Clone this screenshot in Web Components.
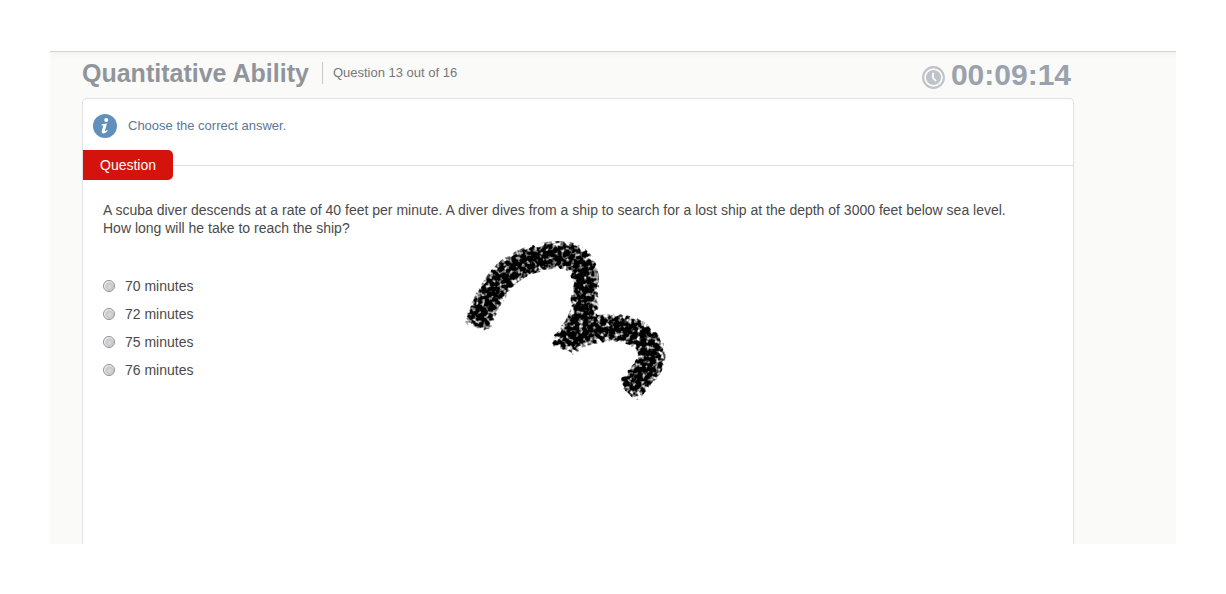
<!DOCTYPE html>
<html lang="en">
<head>
<meta charset="utf-8">
<title>Quantitative Ability</title>
<style>
body { margin: 0; background: #fff; font-family: "Liberation Sans", Arial, sans-serif; color: #4a4a4a; }
</style>
</head>
<body>
<quiz-page>
  <quiz-header slot="header">
    <span slot="title">Quantitative Ability</span>
    <span slot="progress">Question 13 out of 16</span>
    <quiz-timer slot="timer">00:09:14</quiz-timer>
  </quiz-header>
  <question-card>
    <info-note slot="note">Choose the correct answer.</info-note>
    <span slot="tag">Question</span>
    <span slot="text">A scuba diver descends at a rate of 40 feet per minute. A diver dives from a ship to search for a lost ship at the depth of 3000 feet below sea level. How long will he take to reach the ship?</span>
    <answer-list slot="answers" options="70 minutes|72 minutes|75 minutes|76 minutes"></answer-list>
    <brush-mark slot="mark"></brush-mark>
  </question-card>
</quiz-page>
<script>
const define = (name, html, setup) => customElements.define(name, class extends HTMLElement {
  constructor() {
    super();
    this.attachShadow({ mode: "open" }).innerHTML = html;
  }
  connectedCallback() { if (setup) setup(this, this.shadowRoot); }
});

define("quiz-page", `
<style>
  :host { display: flex; box-sizing: border-box; min-height: 100vh; padding: 51px 50px 50px; }
  main { flex: 1; display: flex; flex-direction: column; box-sizing: border-box;
    border-top: 1px solid #d3d5d0; padding: 0 102px 0 32px;
    background: linear-gradient(#f3f3f1, #fafaf8 6px); }
  ::slotted(question-card) { flex: 1; }
</style>
<main><slot name="header"></slot><slot></slot></main>`);

define("quiz-header", `
<style>
  :host { display: block; }
  header { display: flex; align-items: center; height: 46px; box-sizing: border-box; padding-bottom: 4px; }
  h1 { margin: 0; font-size: 25px; line-height: 30px; font-weight: bold; color: #90959b; white-space: nowrap; }
  p { margin: 0 0 0 13px; padding-left: 10px; border-left: 1px solid #c6c8ca;
    font-size: 13px; line-height: 22px; color: #75787b; white-space: nowrap; }
  .time { margin-left: auto; padding: 4px 3px 0 0; }
</style>
<header>
  <h1><slot name="title"></slot></h1>
  <p><slot name="progress"></slot></p>
  <div class="time"><slot name="timer"></slot></div>
</header>`);

define("quiz-timer", `
<style>
  :host { display: flex; align-items: center; gap: 6px; font-size: 30px; line-height: 34px; font-weight: bold; color: #99a2ad; }
  svg { display: block; margin-top: 4px; }
</style>
<svg width="23" height="23" viewBox="0 0 23 23" aria-hidden="true">
  <circle cx="11.5" cy="11.5" r="10.4" fill="#fafaf8" stroke="#bdc3c9" stroke-width="2.1"/>
  <circle cx="11.5" cy="11.5" r="7.6" fill="#bdc3c9"/>
  <path d="M11 6.8v5.2l3.2 3" fill="none" stroke="#fff" stroke-width="1.7"/>
</svg>
<time><slot></slot></time>`);

define("question-card", `
<style>
  :host { display: block; position: relative; box-sizing: border-box; background: #fff;
    border: 1px solid #dfe1e2; border-bottom: 0; border-radius: 5px 5px 0 0; }
  .note { padding: 15px 10px 12px; }
  .rule { display: flex; align-items: center; }
  .rule::after { content: ""; flex: 1; height: 1px; background: #dfe1e2; }
  h2 { margin: 0; padding: 0 17px; font-size: 14px; line-height: 30px; font-weight: normal;
    color: #fff; background: #d4130d; border-radius: 0 5px 5px 0; }
  .body { padding: 21px 40px 0 20px; font-size: 14px; line-height: 18px; }
  p { margin: 0 0 35px; }
  .mark { position: absolute; left: 367px; top: 131px; pointer-events: none; }
</style>
<div class="note"><slot name="note"></slot></div>
<div class="rule"><h2><slot name="tag"></slot></h2></div>
<div class="body">
  <p><slot name="text"></slot></p>
  <slot name="answers"></slot>
</div>
<div class="mark"><slot name="mark"></slot></div>`);

define("info-note", `
<style>
  :host { display: flex; align-items: center; gap: 11px; font-size: 13px; line-height: 24px; color: #5b7796; }
  svg { display: block; }
</style>
<svg width="24" height="24" viewBox="0 0 24 24" aria-hidden="true">
  <circle cx="12" cy="12" r="12" fill="#6290bd"/>
  <circle cx="13.2" cy="6" r="2" fill="#fff"/>
  <path d="M8.7 10.2 14 9.4l-2 7.2q-.2.9.5.6l1.5-1.2.8.8q-2.1 2.6-4.3 2.6-2.3 0-1.7-2.4l1.5-5.4-1.8-.2Z" fill="#fff"/>
</svg>
<span><slot></slot></span>`);

define("answer-list", `
<style>
  :host { display: block; font-size: 14px; line-height: 28px; }
  fieldset { margin: 0; padding: 0; border: 0; min-width: 0; display: grid; justify-items: start; }
  label { display: flex; align-items: center; gap: 10px; }
  input { appearance: none; width: 12px; height: 12px; margin: 0; border: 1px solid #8b8d90; border-radius: 50%;
    background: radial-gradient(circle at 55% 55%, #dcdde0 0, #c6c8cb 3px, #d0d1d4 4px, #f1f1f1 5px); }
  input:checked { background: radial-gradient(circle, #2d5a87 35%, #f1f1f1 45%); }
</style>
<fieldset aria-label="Answers"></fieldset>`, (host, root) => {
  const set = root.querySelector("fieldset");
  set.replaceChildren(...host.getAttribute("options").split("|").map((text, i) => {
    const label = document.createElement("label");
    const input = document.createElement("input");
    input.type = "radio";
    input.name = "answer";
    input.id = "answer-" + i;
    label.htmlFor = input.id;
    const span = document.createElement("span");
    span.textContent = text;
    label.append(input, span);
    return label;
  }));
});

define("brush-mark", `
<style>
  :host, svg { display: block; }
</style>
<svg width="230" height="180" viewBox="0 0 690 540" aria-hidden="true">
  <defs>
    <filter id="chalk" x="0" y="0" width="690" height="540" filterUnits="userSpaceOnUse" color-interpolation-filters="sRGB">
      <feGaussianBlur in="SourceAlpha" stdDeviation="11" result="soft"/>
      <feTurbulence type="fractalNoise" baseFrequency="0.075" numOctaves="2" seed="7" result="noise"/>
      <feComposite in="soft" in2="noise" operator="arithmetic" k1="0" k2="2.2" k3="3.2" k4="-2.7" result="grain"/>
      <feColorMatrix in="grain" type="matrix" values="0 0 0 0 0  0 0 0 0 0  0 0 0 0 0  0 0 0 1 0" result="ink"/>
      <feComposite in="ink" in2="SourceAlpha" operator="in" result="cut"/>
      <feGaussianBlur in="cut" stdDeviation="1.3"/>
    </filter>
  </defs>
  <g filter="url(#chalk)" fill="none" stroke="#000" stroke-width="84">
    <path d="M76 295C106 225 138 150 190 115C240 85 300 70 345 76C405 86 410 135 404 190C404 240 402 260 384 288C370 308 352 326 343 360"/>
    <path d="M340 345C380 306 430 294 495 293C560 294 606 338 605 378C600 420 566 446 529 486"/>
  </g>
</svg>`);
</script>
</body>
</html>
